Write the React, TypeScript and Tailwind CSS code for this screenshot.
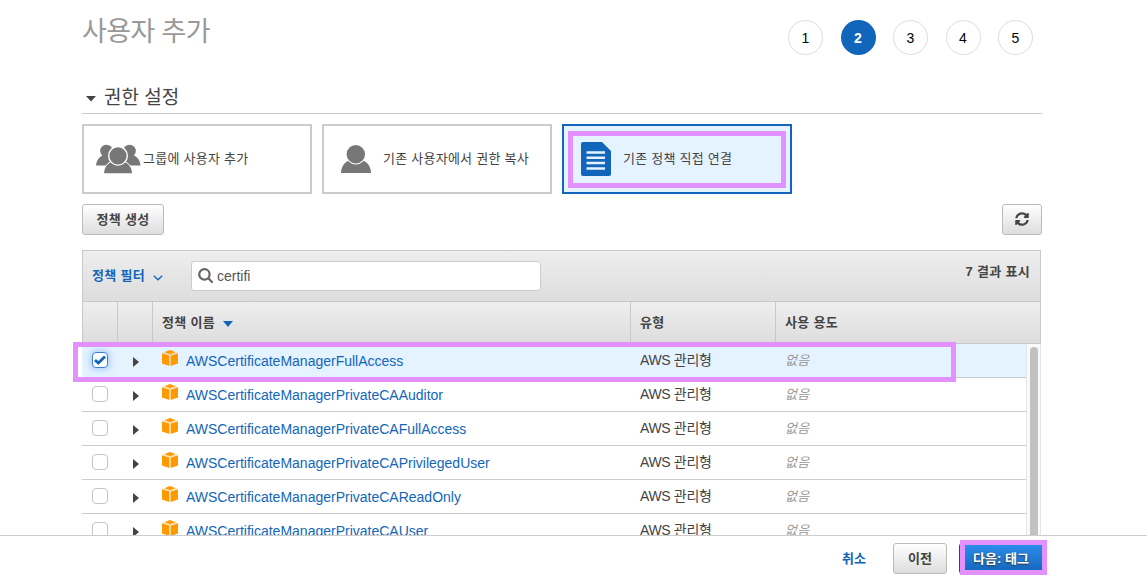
import React from "react";
import { FaSyncAlt } from "react-icons/fa";

interface Policy {
  name: string;
  type: string;
  checked?: boolean;
}

const policies: Policy[] = [
  { name: "AWSCertificateManagerFullAccess", type: "AWS 관리형", checked: true },
  { name: "AWSCertificateManagerPrivateCAAuditor", type: "AWS 관리형" },
  { name: "AWSCertificateManagerPrivateCAFullAccess", type: "AWS 관리형" },
  { name: "AWSCertificateManagerPrivateCAPrivilegedUser", type: "AWS 관리형" },
  { name: "AWSCertificateManagerPrivateCAReadOnly", type: "AWS 관리형" },
  { name: "AWSCertificateManagerPrivateCAUser", type: "AWS 관리형" },
];

const GroupIcon = () => (
  <svg width="47" height="30" viewBox="0 0 47 30" fill="#777">
    <circle cx="10.500" cy="7" r="6.300" />
    <circle cx="33.500" cy="7" r="6.300" />
    <path d="M0 21.500C0.500 16.500 2.500 13.500 6.500 11.500H15V21.500Z" />
    <path d="M44.500 21.500C44 16.500 42 13.500 38 11.500H29V21.500Z" />
    <path
      d="M8 29.200C8.500 23.500 11 20 15.500 17.800H28.500C33 20 35.500 23.500 36 29.200Z"
      stroke="#fff"
      strokeWidth="2"
      paintOrder="stroke"
    />
    <circle cx="22" cy="11.800" r="9.300" stroke="#fff" strokeWidth="1.400" />
  </svg>
);

const UserIcon = () => (
  <svg width="30" height="28" viewBox="0 0 30 28" fill="#777">
    <path d="M0 28C0.200 22 3 17.500 8 15.500H22C27 17.500 29.800 22 30 28Z" />
    <circle cx="14.800" cy="9.200" r="10.200" fill="#fff" />
    <circle cx="14.800" cy="9.200" r="9.200" />
  </svg>
);

const DocumentIcon = () => (
  <svg width="30" height="34" viewBox="0 0 30 34">
    <path d="M2 0H21L30 9V32A2 2 0 0 1 28 34H2A2 2 0 0 1 0 32V2A2 2 0 0 1 2 0Z" fill="#1166bb" />
    <path d="M5.500 10.500H24M5.500 15.700H24M5.500 21H24M5.500 26.500H24" stroke="#e5f2ff" strokeWidth="2.500" />
  </svg>
);

const CubeIcon = () => (
  <svg width="16" height="16" viewBox="0 0 16 16" fill="#ff9900">
    <path d="M2.800 2L8 0L13.200 2L8 4.300Z" />
    <path d="M0 3.300L7.400 5.500V16L0 13.500Z" />
    <path d="M16 3.300L8.600 5.500V16L16 13.500Z" />
    <path d="M0.800 2.700L2.800 2L8 4.300L13.200 2L15.200 2.700L8 4.900Z" fillOpacity="0.500" />
  </svg>
);

const SearchIcon = () => (
  <svg width="16" height="16" viewBox="0 0 16 16" fill="none" stroke="#666" strokeWidth="2.200">
    <circle cx="6.400" cy="6.400" r="5.200" />
    <path d="M10.300 10.300L14 14" strokeLinecap="round" />
  </svg>
);

const Steps = () => (
  <div className="mt-5 mr-[9px] flex h-[35px] w-[245px] justify-between">
    {[1, 2, 3, 4, 5].map((step) => (
      <div
        key={step}
        className={
          step === 2
            ? "flex size-[35px] items-center justify-center rounded-full bg-[#1166bb] pt-px font-bold text-white"
            : "flex size-[35px] items-center justify-center rounded-full border border-[#ddd] pt-px text-black"
        }
      >
        {step}
      </div>
    ))}
  </div>
);

interface OptionCardProps {
  icon: React.ReactNode;
  label: string;
  selected?: boolean;
}

const OptionCard: React.FC<OptionCardProps> = ({ icon, label, selected = false }) => (
  <div
    className={
      selected
        ? "relative flex h-[70px] w-[230px] items-center border-2 border-[#1166bb] bg-[#e5f2ff]"
        : "relative flex h-[70px] w-[230px] items-center border-2 border-[#ccc]"
    }
  >
    <div className="flex w-[59px] shrink-0 justify-end">{icon}</div>
    <span className="text-[13px] tracking-[0.25px]">{label}</span>
    {selected && (
      <div className="absolute top-[5px] left-1 h-[57px] w-[218px] border-[5px] border-[#e391ff]" />
    )}
  </div>
);

const Checkbox: React.FC<{ checked?: boolean }> = ({ checked = false }) =>
  checked ? (
    <span className="flex size-4 items-center justify-center rounded-[4px] border border-[#3b82d8] bg-white shadow-[0_0_6px_2px_#a9cff8]">
      <svg width="12" height="12" viewBox="0 0 12 12" fill="none" stroke="#1166bb" strokeWidth="2.800">
        <path d="M1 6L4.300 9L11 2.400" />
      </svg>
    </span>
  ) : (
    <span className="size-4 rounded-[4px] border border-[#c4c4c4] bg-white" />
  );

const PolicyRow: React.FC<{ policy: Policy }> = ({ policy }) => (
  <div
    className={
      policy.checked
        ? "relative flex h-[34px] border-b border-[#ccc] bg-[#e5f2ff]"
        : "relative flex h-[34px] border-b border-[#ccc]"
    }
  >
    <div className="flex w-9 items-start pt-2 pl-2.5">
      <Checkbox checked={policy.checked} />
    </div>
    <div className="w-[35px] pt-[13px] pl-[15px]">
      <svg width="6" height="10" viewBox="0 0 6 10">
        <path d="M0 0L6 5L0 10Z" fill="#444" />
      </svg>
    </div>
    <div className="flex w-[478px] items-start pt-1.5 pl-[9px]">
      <CubeIcon />
      <a className="pt-0.5 pl-2 leading-[18px] text-[#1166bb]">{policy.name}</a>
    </div>
    <div className="w-[145px] pt-[7px] pl-[9px] leading-[18px] tracking-[-0.35px]">{policy.type}</div>
    <div className="pt-2 pl-[9px] text-[13px] leading-[18px] tracking-[0.3px] text-[#999] italic">없음</div>
    {policy.checked && (
      <div className="absolute -top-0.5 left-[-9px] z-10 h-10 w-[883px] border-[5px] border-[#e391ff]" />
    )}
  </div>
);

const PolicyTable = () => (
  <div className="mt-[15px] w-[959px]">
    <div className="flex h-[52px] justify-between border border-[#c8c8c8] bg-linear-to-b from-[#eee] to-[#ddd]">
      <div className="flex items-center">
        <span className="w-[61px] pl-[9px] text-[13px] font-bold tracking-[0.3px] whitespace-nowrap text-[#1166bb]">정책 필터</span>
        <svg className="mt-1 ml-[9px]" width="10" height="6" viewBox="0 0 10 6" fill="none" stroke="#1166bb" strokeWidth="1.400">
          <path d="M0.800 0.800L5 4.800L9.200 0.800" />
        </svg>
        <div className="ml-7 flex h-[30px] w-[350px] items-center rounded-[3px] border border-[#ccc] bg-white pl-1.5">
          <SearchIcon />
          <span className="pl-[3px] text-[#555]">certifi</span>
        </div>
      </div>
      <span className="pt-3 pr-2.5 text-[13px] leading-[18px] font-bold tracking-[0.3px]">7 결과 표시</span>
    </div>
    <div className="flex h-[42px] border-x border-b border-[#c8c8c8] bg-linear-to-b from-[#eee] to-[#ddd] text-[13px] font-bold tracking-[0.3px]">
      <div className="w-[35px] border-r border-[#c8c8c8]" />
      <div className="w-[35px] border-r border-[#c8c8c8]" />
      <div className="flex w-[478px] items-center border-r border-[#c8c8c8] pt-0.5 pl-[9px]">
        정책 이름
        <svg className="ml-2" width="10" height="6" viewBox="0 0 10 6">
          <path d="M0 0H10L5 6Z" fill="#1166bb" />
        </svg>
      </div>
      <div className="flex w-[145px] items-center border-r border-[#c8c8c8] pt-0.5 pl-[9px]">유형</div>
      <div className="flex items-center pt-0.5 pl-[9px]">사용 용도</div>
    </div>
    <div className="flex">
      <div className="w-[944px]">
        {policies.map((policy) => (
          <PolicyRow key={policy.name} policy={policy} />
        ))}
      </div>
      <div className="w-[15px] border-x border-[#e5e5e5] bg-[#fafafa] pt-[3px] pl-[3px]">
        <div className="h-full w-2 rounded-t-full bg-[#c1c1c1]" />
      </div>
    </div>
  </div>
);

export default function App() {
  return (
    <div className="flex h-[575px] w-[1147px] flex-col overflow-hidden bg-white font-['Liberation_Sans','Noto_Sans_CJK_KR',sans-serif] text-sm text-[#444]">
      <div className="min-h-0 flex-1 overflow-hidden pl-[82px]">
        <div className="w-[960px]">
          <div className="flex h-20 justify-between">
            <h1 className="pt-[13px] text-[27px] leading-[38px] tracking-[-0.6px] text-[#999]">사용자 추가</h1>
            <Steps />
          </div>
          <div className="flex h-[34px] items-center border-b border-[#ccc] pl-1">
            <svg className="mt-1" width="10" height="6" viewBox="0 0 10 6">
              <path d="M0 0H10L5 5.500Z" fill="#444" />
            </svg>
            <h2 className="pt-0.5 pl-2 text-[19px] leading-7">권한 설정</h2>
          </div>
          <div className="mt-2.5 flex gap-2.5">
            <OptionCard icon={<GroupIcon />} label="그룹에 사용자 추가" />
            <OptionCard icon={<div className="pr-3"><UserIcon /></div>} label="기존 사용자에서 권한 복사" />
            <OptionCard icon={<div className="pr-3"><DocumentIcon /></div>} label="기존 정책 직접 연결" selected />
          </div>
          <div className="mt-2.5 flex justify-between">
            <button className="h-[31px] w-[82px] rounded-[3px] border border-[#bbb] bg-linear-to-b from-white to-[#ddd] pt-px text-[13px] font-bold tracking-[0.3px]">
              정책 생성
            </button>
            <button className="flex h-[31px] w-10 items-center justify-center rounded-[3px] border border-[#bbb] bg-linear-to-b from-white to-[#ddd] pb-0.5">
              <FaSyncAlt size={14} />
            </button>
          </div>
          <PolicyTable />
        </div>
      </div>
      <div className="flex h-10 shrink-0 items-start border-t border-[#ccc] bg-white pl-[842px] text-[13px] font-bold">
        <span className="w-[51px] pt-3.5 leading-[18px] text-[#1166bb]">취소</span>
        <button className="mt-[7px] h-[31px] w-[54px] rounded-[3px] border border-[#bbb] bg-linear-to-b from-white to-[#ddd] pt-px">
          이전
        </button>
        <div className="relative mt-[7px] ml-3">
          <button className="h-[31px] w-[84px] rounded-[3px] border border-[#11508e] bg-linear-to-b from-[#2e8ded] to-[#1166bb] pt-px text-white [text-shadow:0_1px_2px_#333]">
            다음: 태그
          </button>
          <div className="absolute -top-[3px] left-px h-[35px] w-[87px] border-[5px] border-[#e391ff]" />
        </div>
      </div>
    </div>
  );
}
